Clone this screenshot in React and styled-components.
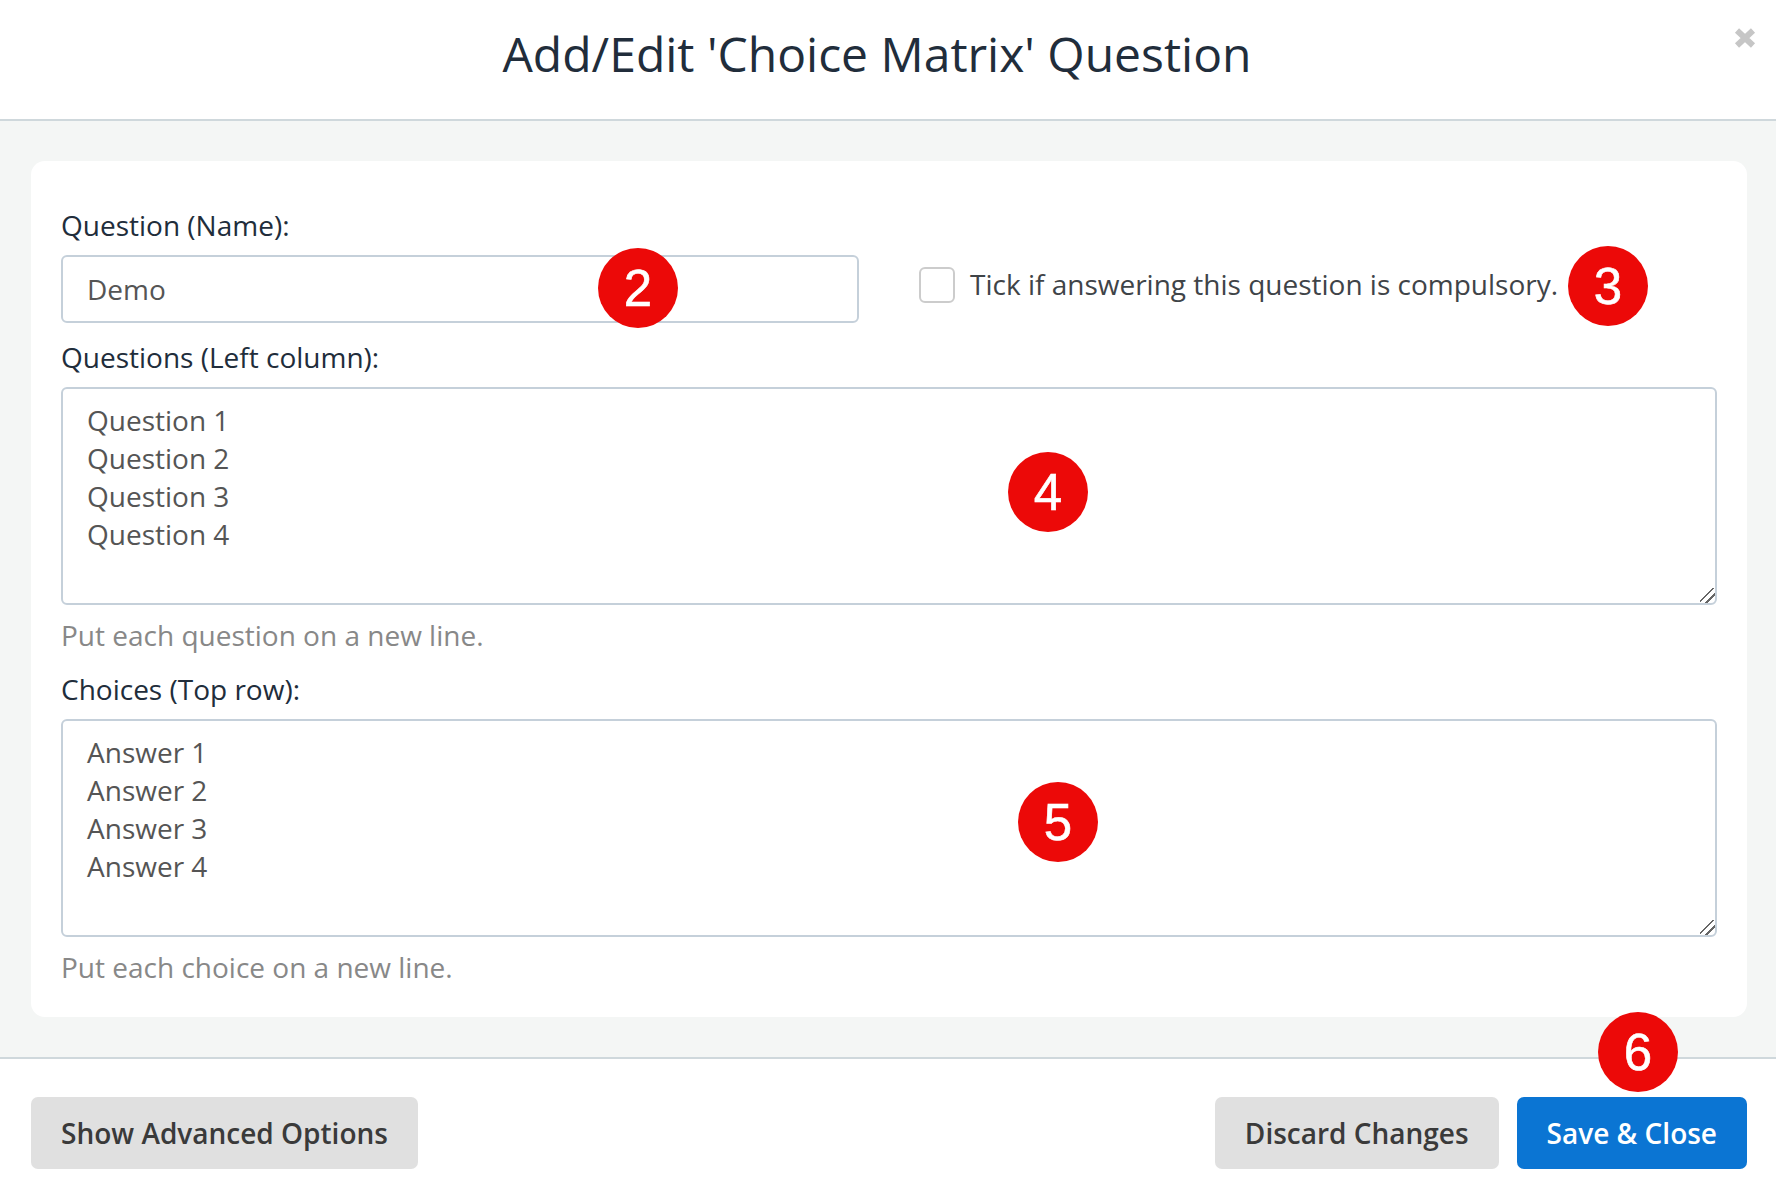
import React from "react";
import styled, { createGlobalStyle } from "styled-components";

const GlobalStyle = createGlobalStyle`
  html, body {
    margin: 0;
    padding: 0;
    background: #ffffff;
  }
  * {
    box-sizing: border-box;
  }
`;

const Modal = styled.div`
  position: relative;
  width: 1776px;
  height: 1200px;
  display: flex;
  flex-direction: column;
  background: #ffffff;
  font-family: "Open Sans", "Noto Sans", sans-serif;
  overflow: hidden;
`;

const Header = styled.header`
  height: 121px;
  flex-shrink: 0;
  display: flex;
  align-items: center;
  justify-content: center;
  padding-bottom: 11px;
  padding-right: 22px;
  border-bottom: 2px solid #cfd8dc;
`;

const Title = styled.h1`
  margin: 0;
  font-size: 48px;
  font-weight: 400;
  line-height: 1.2;
  color: #212d3b;
`;

const CloseButton = styled.svg`
  position: absolute;
  top: 28px;
  right: 20px;
  width: 22px;
  height: 20px;
`;

const Body = styled.main`
  height: 938px;
  flex-shrink: 0;
  padding: 40px 29px 40px 31px;
  background: #f4f6f5;
  border-bottom: 2px solid #cfd8dc;
`;

const Card = styled.section`
  height: 856px;
  padding: 45px 30px 0 30px;
  background: #ffffff;
  border-radius: 14px;
`;

const Label = styled.label`
  display: block;
  font-size: 28px;
  line-height: 38px;
  color: #212d3b;
`;

const NameRow = styled.div`
  display: flex;
  align-items: flex-start;
  margin-bottom: 15px;
`;

const NameField = styled.div`
  width: 798px;
  flex-shrink: 0;
`;

const TextInput = styled.input`
  display: block;
  width: 100%;
  height: 68px;
  margin-top: 11px;
  padding: 0 24px;
  font: 400 28px "Open Sans", sans-serif;
  color: #555555;
  background: #ffffff;
  border: 2px solid #c5d0da;
  border-radius: 6px;
  outline: none;
`;

const Compulsory = styled.div`
  display: flex;
  align-items: center;
  gap: 15px;
  margin: 59px 0 0 60px;
  font-size: 28px;
  line-height: 38px;
  color: #3f4448;
`;

const CompulsoryText = styled.span`
  margin-bottom: 1px;
`;

const Checkbox = styled.span`
  display: block;
  width: 36px;
  height: 36px;
  border: 2px solid #cccccc;
  border-radius: 6px;
  background: #ffffff;
`;

const TextArea = styled.textarea`
  display: block;
  width: 100%;
  height: 218px;
  margin-top: 11px;
  padding: 12px 24px;
  font: 400 28px/38px "Open Sans", sans-serif;
  color: #555555;
  background: #ffffff;
  border: 2px solid #c5d0da;
  border-radius: 6px;
  outline: none;
  resize: vertical;

  &::-webkit-resizer {
    background: linear-gradient(
      135deg,
      transparent 8.7px,
      #666666 8.7px,
      #666666 10.3px,
      transparent 10.3px,
      transparent 14px,
      #666666 14px,
      #666666 15.6px,
      transparent 15.6px
    );
  }
`;

const Hint = styled.p`
  margin: 11px 0 16px;
  font-size: 28px;
  line-height: 38px;
  color: #888888;
`;

const Footer = styled.footer`
  flex: 1;
  display: flex;
  align-items: flex-start;
  justify-content: space-between;
  padding: 38px 29px 0 31px;
`;

const ButtonGroup = styled.div`
  display: flex;
  gap: 18px;
`;

const Button = styled.button`
  height: 72px;
  padding: 0 30px;
  font: 600 28px "Open Sans", sans-serif;
  color: ${(props) => (props.$primary ? "#ffffff" : "#3a3a3a")};
  background: ${(props) => (props.$primary ? "#0b75d3" : "#e0e0e0")};
  border: none;
  border-radius: 7px;
`;

const Badge = styled.span`
  position: absolute;
  left: ${(props) => props.$x - 40}px;
  top: ${(props) => props.$y - 40}px;
  width: 80px;
  height: 80px;
  display: flex;
  align-items: center;
  justify-content: center;
  font-family: "Liberation Sans", Arial, sans-serif;
  font-size: 51px;
  color: #ffffff;
  background: #ec0908;
  border-radius: 50%;
  -webkit-text-stroke: 0.6px #ffffff;
`;

const badges = [
  { n: 2, x: 638, y: 288 },
  { n: 3, x: 1608, y: 286 },
  { n: 4, x: 1048, y: 492 },
  { n: 5, x: 1058, y: 822 },
  { n: 6, x: 1638, y: 1052 },
];

export default function App() {
  return (
    <Modal>
      <GlobalStyle />
      <Header>
        <Title>Add/Edit 'Choice Matrix' Question</Title>
      </Header>
      <CloseButton viewBox="0 0 22 20">
        <path
          d="M3 2.5 L19 17.5 M19 2.5 L3 17.5"
          stroke="#c6c6c6"
          strokeWidth="6"
          fill="none"
        />
      </CloseButton>
      <Body>
        <Card>
          <NameRow>
            <NameField>
              <Label>Question (Name):</Label>
              <TextInput readOnly value="Demo" />
            </NameField>
            <Compulsory>
              <Checkbox />
              <CompulsoryText>
                Tick if answering this question is compulsory.
              </CompulsoryText>
            </Compulsory>
          </NameRow>
          <Label>Questions (Left column):</Label>
          <TextArea
            readOnly
            value={"Question 1\nQuestion 2\nQuestion 3\nQuestion 4"}
          />
          <Hint>Put each question on a new line.</Hint>
          <Label>Choices (Top row):</Label>
          <TextArea
            readOnly
            value={"Answer 1\nAnswer 2\nAnswer 3\nAnswer 4"}
          />
          <Hint>Put each choice on a new line.</Hint>
        </Card>
      </Body>
      <Footer>
        <Button>Show Advanced Options</Button>
        <ButtonGroup>
          <Button>Discard Changes</Button>
          <Button $primary>Save &amp; Close</Button>
        </ButtonGroup>
      </Footer>
      {badges.map((badge) => (
        <Badge key={badge.n} $x={badge.x} $y={badge.y}>
          {badge.n}
        </Badge>
      ))}
    </Modal>
  );
}
